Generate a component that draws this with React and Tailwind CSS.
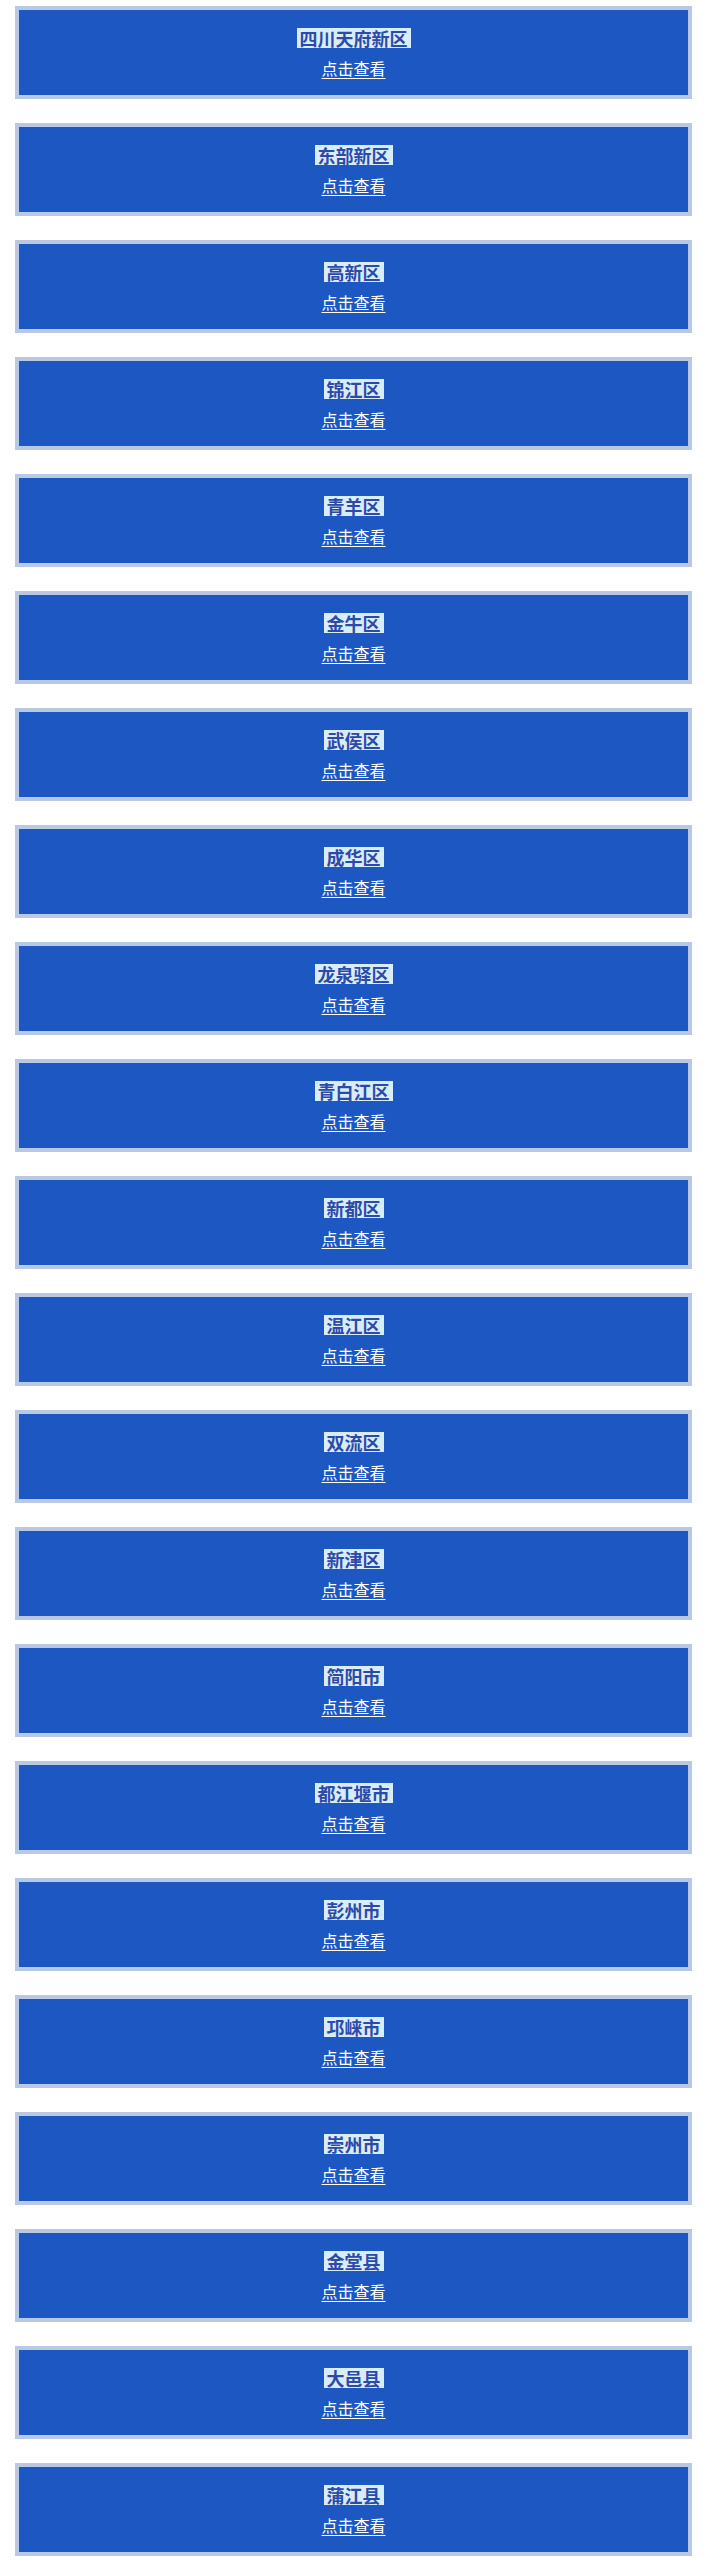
const AREAS = [
  '四川天府新区', '东部新区', '高新区', '锦江区', '青羊区', '金牛区', '武侯区', '成华区',
  '龙泉驿区', '青白江区', '新都区', '温江区', '双流区', '新津区', '简阳市', '都江堰市',
  '彭州市', '邛崃市', '崇州市', '金堂县', '大邑县', '蒲江县',
]

function AreaCard({ name }) {
  return (
    <div className="ml-[15px] w-[677px] h-[93px] border-4 border-[#b9c9e4] bg-[#1d57c1] flex flex-col items-center justify-center">
      <span className="bg-[#d8edfb] text-[#2c4aa9] font-bold text-[18px] leading-[20px] px-[3px]">{name}</span>
      <a href="#" className="mt-[10px] text-white text-[16px] leading-[20px] underline underline-offset-[3px]">点击查看</a>
    </div>
  )
}

export default function App() {
  return (
    <div className="bg-white pt-[6px] pb-[20px] flex flex-col gap-[24px]" style={{ fontFamily: '"Noto Sans CJK SC", "Noto Sans", sans-serif' }}>
      {AREAS.map(name => <AreaCard key={name} name={name} />)}
    </div>
  )
}
